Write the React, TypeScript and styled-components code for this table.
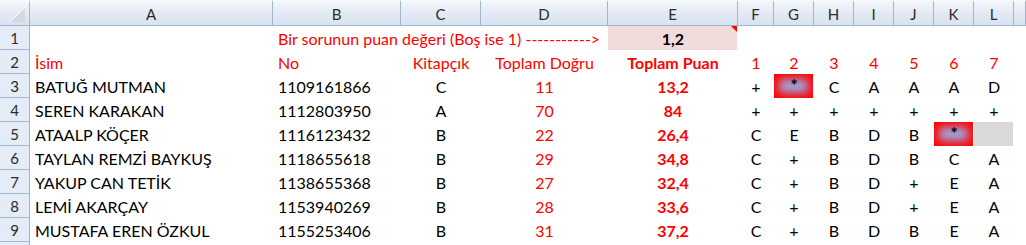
import React from 'react'
import styled, { createGlobalStyle, css } from 'styled-components'

const GlobalStyle = createGlobalStyle`
    html, body {
        margin: 0;
        padding: 0;
        background: #ffffff;
    }
    body {
        font-family: 'Lato', 'Open Sans', sans-serif;
        font-size: 16px;
    }
`

// last column (M) is cut off by the window edge, so its letter is not shown
const COLS = ['A', 'B', 'C', 'D', 'E', 'F', 'G', 'H', 'I', 'J', 'K', 'L', '']
const WIDTHS = [30, 243, 128, 80, 127, 130, 36, 40, 40, 40, 40, 40, 40, 12]

const Sheet = styled.div`
    display: grid;
    grid-template-columns: ${WIDTHS.map(w => `${w}px`).join(' ')};
    grid-template-rows: 26px repeat(10, 24px);
    height: 245px;
    width: 1026px;
    overflow: hidden;
    color: #000000;
`

const headerBg = css`
    background: linear-gradient(#f3f6fb, #e2e9f4 55%, #d9e2f0);
    border-bottom: 1px solid #9eb6ce;
    border-top: 2px solid #f5f8fc;
    box-sizing: border-box;
`

const Corner = styled.div`
    ${headerBg};
    border-right: 1px solid #9eb6ce;
    display: flex;
    align-items: flex-end;
    justify-content: flex-end;
    padding: 0 4px 3px 0;
`

const ColHeader = styled.div`
    ${headerBg};
    border-right: 1px solid #9eb6ce;
    display: flex;
    align-items: center;
    justify-content: center;
    font-size: 15px;
    color: #2b2b2b;
    padding-top: 1px;
`

const RowHeader = styled.div`
    background: #e4ecf7;
    border-right: 1px solid #9eb6ce;
    border-bottom: 1px solid #9eb6ce;
    box-sizing: border-box;
    display: flex;
    align-items: center;
    justify-content: center;
    font-size: 15px;
    color: #2b2b2b;
`

type Align = 'left' | 'center'
type Fill = 'none' | 'pink' | 'gray' | 'burst'

const Cell = styled.div<{
    $align?: Align
    $red?: boolean
    $bold?: boolean
    $fill?: Fill
    $span?: number
}>`
    position: relative;
    display: flex;
    align-items: flex-end;
    justify-content: ${p => (p.$align === 'center' ? 'center' : 'flex-start')};
    padding: 0 4px 2px 5px;
    box-sizing: border-box;
    white-space: nowrap;
    overflow: visible;
    color: ${p => (p.$red ? '#ff0000' : '#000000')};
    font-weight: ${p => (p.$bold ? 700 : 400)};
    grid-column: ${p => (p.$span ? `span ${p.$span}` : 'auto')};
    margin-right: 1px;
    ${p =>
        p.$fill === 'pink' &&
        css`
            background: #f2dcdb;
        `}
    ${p =>
        p.$fill === 'gray' &&
        css`
            background: #d9d9d9;
        `}
    ${p =>
        p.$fill === 'burst' &&
        css`
            background: #9ba6dc;
            box-shadow: inset 0 0 9px 5px #ff0000;
            align-items: center;
            padding-bottom: 0;
        `}
`

const CommentMark = styled.span`
    position: absolute;
    top: 0;
    right: 0;
    width: 0;
    height: 0;
    border-top: 6px solid #ff0000;
    border-left: 6px solid transparent;
`

const Star = styled.span`
    font-size: 17px;
    font-weight: 700;
    line-height: 1;
    margin-top: -2px;
`

type Row = {
    name: string
    no: string
    book: string
    correct: string
    score: string
    answers: string[]
}

const rows: Row[] = [
    { name: 'BATUĞ MUTMAN', no: '1109161866', book: 'C', correct: '11', score: '13,2', answers: ['+', '*', 'C', 'A', 'A', 'A', 'D'] },
    { name: 'SEREN KARAKAN', no: '1112803950', book: 'A', correct: '70', score: '84', answers: ['+', '+', '+', '+', '+', '+', '+'] },
    { name: 'ATAALP KÖÇER', no: '1116123432', book: 'B', correct: '22', score: '26,4', answers: ['C', 'E', 'B', 'D', 'B', '*', ''] },
    { name: 'TAYLAN REMZİ BAYKUŞ', no: '1118655618', book: 'B', correct: '29', score: '34,8', answers: ['C', '+', 'B', 'D', 'B', 'C', 'A'] },
    { name: 'YAKUP CAN TETİK', no: '1138655368', book: 'B', correct: '27', score: '32,4', answers: ['C', '+', 'B', 'D', '+', 'E', 'A'] },
    { name: 'LEMİ AKARÇAY', no: '1153940269', book: 'B', correct: '28', score: '33,6', answers: ['C', '+', 'B', 'D', '+', 'E', 'A'] },
    { name: 'MUSTAFA EREN ÖZKUL', no: '1155253406', book: 'B', correct: '31', score: '37,2', answers: ['C', '+', 'B', 'D', 'B', 'E', 'A'] },
]

const answerFill = (a: string): Fill => {
    if (a === '*') return 'burst'
    if (a === '') return 'gray'
    return 'none'
}

const CornerTriangle = () => (
    <svg width="15" height="15" viewBox="0 0 15 15">
        <polygon points="15,0 15,15 0,15" fill="#d2d9e3" />
        <polyline points="0,15 15,0" stroke="#ffffff" strokeWidth="1" fill="none" />
    </svg>
)

const App = () => {
    return (
        <>
            <GlobalStyle />
            <Sheet>
                <Corner>
                    <CornerTriangle />
                </Corner>
                {COLS.map((c, i) => (
                    <ColHeader key={i}>{c}</ColHeader>
                ))}

                <RowHeader>1</RowHeader>
                <Cell />
                <Cell $red $span={3}>
                    Bir sorunun puan değeri (Boş ise 1) -----------&gt;
                </Cell>
                <Cell $align="center" $bold $fill="pink">
                    1,2
                    <CommentMark />
                </Cell>
                {COLS.slice(5).map((c, i) => (
                    <Cell key={i} />
                ))}

                <RowHeader>2</RowHeader>
                <Cell $red>İsim</Cell>
                <Cell $red>No</Cell>
                <Cell $red $align="center">
                    Kitapçık
                </Cell>
                <Cell $red $align="center">
                    Toplam Doğru
                </Cell>
                <Cell $red $bold $align="center">
                    Toplam Puan
                </Cell>
                {[1, 2, 3, 4, 5, 6, 7].map(n => (
                    <Cell key={n} $red $align="center">
                        {n}
                    </Cell>
                ))}
                <Cell />

                {rows.map((r, i) => (
                    <React.Fragment key={r.no}>
                        <RowHeader>{i + 3}</RowHeader>
                        <Cell>{r.name}</Cell>
                        <Cell>{r.no}</Cell>
                        <Cell $align="center">{r.book}</Cell>
                        <Cell $red $align="center">
                            {r.correct}
                        </Cell>
                        <Cell $red $bold $align="center">
                            {r.score}
                        </Cell>
                        {r.answers.map((a, j) => (
                            <Cell key={j} $align="center" $fill={answerFill(a)}>
                                {a === '*' ? <Star>*</Star> : a}
                            </Cell>
                        ))}
                        <Cell />
                    </React.Fragment>
                ))}

                <RowHeader />
            </Sheet>
        </>
    )
}

export default App
